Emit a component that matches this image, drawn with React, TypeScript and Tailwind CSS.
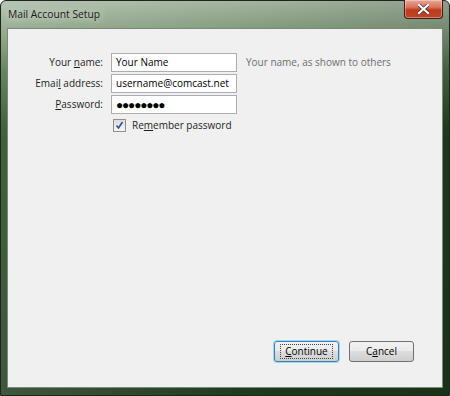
import React from "react";

const ui = "font-['Segoe_UI','Open_Sans',sans-serif]";

function Field({ value, password }: { value: string; password?: boolean }) {
  return (
    <div className="flex h-[19px] w-[126px] items-center border border-[#abadb3] bg-white pl-[4px] text-[10px] text-black">
      {password ? (
        <span className="text-[12px] leading-none tracking-[-1.2px] font-bold">●●●●●●●●</span>
      ) : (
        <span>{value}</span>
      )}
    </div>
  );
}

function Label({ children }: { children: React.ReactNode }) {
  return (
    <div className="flex h-[19px] items-center justify-end text-[10px] text-[#1e1e1e]">
      <span>{children}</span>
    </div>
  );
}

function Button({ children, focused }: { children: React.ReactNode; focused?: boolean }) {
  return (
    <button
      className={`flex h-[21px] w-[65px] items-center justify-center rounded-[3px] border text-[10px] text-black bg-[linear-gradient(to_bottom,#f2f2f2_0%,#ebebeb_45%,#dddddd_50%,#cfcfcf_100%)] ${
        focused ? "border-[#3c7fb1] shadow-[0_0_0_1px_#9cd7f5]" : "border-[#707070]"
      }`}
    >
      <span className={focused ? "px-[4px] outline-1 outline-dotted outline-[#444] leading-[13px]" : ""}>{children}</span>
    </button>
  );
}

export default function App() {
  return (
    <div className={`h-[396px] w-[450px] overflow-hidden ${ui}`}>
      {/* window frame */}
      <div className="relative flex h-full w-full flex-col rounded-t-[6px] border border-[#1c241b] bg-[linear-gradient(to_right,rgba(255,255,255,0.15),rgba(0,0,0,0.05)_60%,rgba(0,0,0,0.15)),linear-gradient(to_bottom,#aabba6_0px,#8ba586_25px,#4d6f47_70px,#22421f_130px,#1d3b1b_100%)] px-[6px] pb-[7px]">
        {/* title bar */}
        <div className="flex h-[27px] shrink-0 items-center pl-[1px] pt-[1px]">
          <span className="text-[10.3px] text-[#1a1a1a] [text-shadow:0_0_8px_rgba(255,255,255,0.9)]">Mail Account Setup</span>
        </div>

        {/* close button */}
        <div className="absolute right-[6px] top-[-1px] flex h-[19px] w-[39px] items-center justify-center rounded-b-[4px] border border-t-0 border-[#4a1a10] bg-[linear-gradient(to_bottom,#e5a896_0%,#d9745d_40%,#c13a1c_55%,#b8472c_100%)] shadow-[inset_0_0_0_1px_rgba(255,255,255,0.35)]">
          <svg width="11" height="10" viewBox="0 0 11 10">
            <path d="M1 1 L10 9 M10 1 L1 9" stroke="#333" strokeWidth="3.4" strokeLinecap="square" />
            <path d="M1 1 L10 9 M10 1 L1 9" stroke="#fff" strokeWidth="2.2" strokeLinecap="square" />
          </svg>
        </div>

        {/* client area */}
        <div className="flex flex-1 flex-col justify-between border border-[#7a8a78] bg-[#f0f0f0] pb-[25px] pt-[24px]">
          <div className="flex flex-col">
            <div className="grid grid-cols-[95px_126px_auto] items-center gap-x-[8px] gap-y-[2px]">
              <Label>
                Your <u>n</u>ame:
              </Label>
              <Field value="Your Name" />
              <div className="pl-[1px] text-[10px] text-[#6d6d6d]">Your name, as shown to others</div>

              <Label>
                Emai<u>l</u> address:
              </Label>
              <Field value="username@comcast.net" />
              <div />

              <Label>
                <u>P</u>assword:
              </Label>
              <Field value="" password />
              <div />
            </div>

            <div className="mt-[4px] flex items-center gap-[6px] pl-[105px]">
              <div className="flex h-[13px] w-[13px] items-center justify-center border border-[#8f8f8f] bg-[linear-gradient(to_bottom,#dcdcdc,#f6f6f6)]">
                <svg width="9" height="9" viewBox="0 0 9 9">
                  <path d="M1.5 4.5 L3.5 7 L7.5 1" fill="none" stroke="#2f4f9a" strokeWidth="1.6" />
                </svg>
              </div>
              <span className="text-[10px] text-[#1e1e1e]">
                Re<u>m</u>ember password
              </span>
            </div>
          </div>

          <div className="flex justify-end gap-[10px] pr-[28px]">
            <Button focused>
              <u>C</u>ontinue
            </Button>
            <Button>
              C<u>a</u>ncel
            </Button>
          </div>
        </div>
      </div>
    </div>
  );
}
